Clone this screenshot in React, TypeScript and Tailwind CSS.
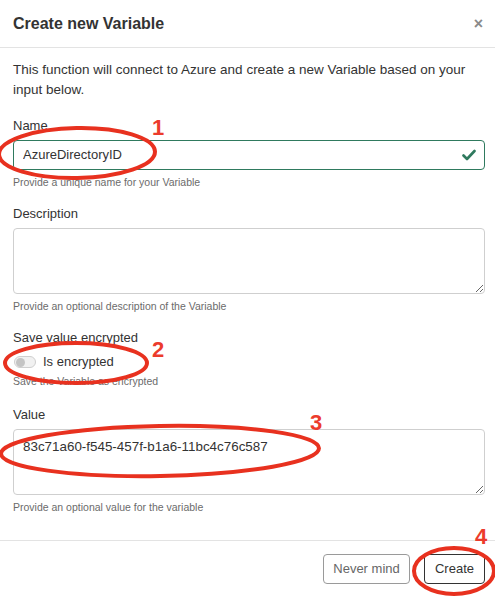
import React from "react";

function Field({ label, help, children, top = "mt-[15px]" }: { label: string; help: string; children: React.ReactNode; top?: string }) {
    return (
        <div className={top}>
            <label className="block text-[13px] leading-[20px] text-[#333]">{label}</label>
            <div className="mt-[4px]">{children}</div>
            <p className="mt-[5px] text-[10.5px] leading-[14px] text-[#6b6b6b]">{help}</p>
        </div>
    );
}

export default function App() {
    return (
        <div className="relative w-[495px] h-[598px] bg-white overflow-hidden font-['Liberation_Sans',Arial,sans-serif] text-[#333]">
            <div className="flex h-[48px] items-center justify-between border-b border-[#e3e3e3] pl-[13px] pr-[12px]">
                <h2 className="text-[16px] font-semibold text-[#333]">Create new Variable</h2>
                <span className="text-[16px] font-bold leading-none text-[#8a8a8a]">×</span>
            </div>

            <div className="pl-[13px] pr-[10px] pt-[12px] pb-[26px]">
                <p className="text-[13.5px] leading-[20px]">
                    This function will connect to Azure and create a new Variable based on your input below.
                </p>

                <Field label="Name" help="Provide a unique name for your Variable" top="mt-[16px]">
                    <div className="flex h-[30px] items-center rounded-[4px] border border-[#2f7a5e] pl-[9px] pr-[8px]">
                        <input
                            readOnly
                            value="AzureDirectoryID"
                            className="flex-1 bg-transparent text-[13px] text-[#333] outline-none"
                        />
                        <svg width="14" height="12" viewBox="0 0 14 12" className="text-[#2f7a5e]">
                            <path d="M1.5 6.5 L5 10 L12.5 2" fill="none" stroke="currentColor" strokeWidth="2.6" strokeLinecap="round" strokeLinejoin="round" />
                        </svg>
                    </div>
                </Field>

                <Field label="Description" help="Provide an optional description of the Variable">
                    <textarea
                        readOnly
                        className="block h-[66px] w-full rounded-[4px] border border-[#cfcfcf] px-[9px] py-[8px] text-[13px] leading-[18px] outline-none"
                    />
                </Field>

                <div className="mt-[15px]">
                    <label className="block text-[13px] leading-[20px]">Save value encrypted</label>
                    <div className="mt-[4px] flex h-[20px] items-center gap-[7px]">
                        <span className="ml-[1px] flex h-[12px] w-[22px] items-center rounded-full border border-[#cfcfcf] bg-[#f1f1f1] px-[1px]">
                            <span className="h-[9px] w-[9px] rounded-full bg-[#c4c4c4]" />
                        </span>
                        <span className="text-[13px]">Is encrypted</span>
                    </div>
                    <p className="mt-[2px] text-[10.5px] leading-[14px] text-[#6b6b6b]">Save the Variable as encrypted</p>
                </div>

                <Field label="Value" help="Provide an optional value for the variable" top="mt-[17px]">
                    <textarea
                        readOnly
                        value="83c71a60-f545-457f-b1a6-11bc4c76c587"
                        className="block h-[66px] w-full rounded-[4px] border border-[#cfcfcf] px-[9px] py-[8px] text-[13.4px] leading-[18px] text-[#333] outline-none"
                    />
                </Field>
            </div>

            <div className="flex items-center justify-end gap-[14px] border-t border-[#e3e3e3] pr-[10px] py-[13px]">
                <button className="h-[30px] w-[87px] rounded-[4px] border border-[#9a9a9a] text-[13px] text-[#666]">Never mind</button>
                <button className="h-[30px] w-[61px] rounded-[4px] border border-[#333] text-[13px] text-[#333]">Create</button>
            </div>

            {/* red annotation marks drawn over the screenshot */}
            <svg className="pointer-events-none absolute inset-0" width="495" height="598">
                <g fill="none" stroke="#e8311f" strokeWidth="4">
                    <ellipse cx="77" cy="153" rx="78" ry="25" transform="rotate(-1 77 153)" />
                    <ellipse cx="76" cy="363" rx="71" ry="20" />
                    <ellipse cx="160" cy="451" rx="159" ry="25" transform="rotate(-1 160 451)" />
                    <ellipse cx="454" cy="571" rx="40" ry="23" />
                </g>
            </svg>
            <span className="pointer-events-none absolute left-[152px] top-[117px] text-[22px] font-bold leading-none text-[#ec3b2c]">1</span>
            <span className="pointer-events-none absolute left-[152px] top-[339px] text-[22px] font-bold leading-none text-[#ec3b2c]">2</span>
            <span className="pointer-events-none absolute left-[310px] top-[412px] text-[22px] font-bold leading-none text-[#ec3b2c]">3</span>
            <span className="pointer-events-none absolute left-[475px] top-[526px] text-[22px] font-bold leading-none text-[#ec3b2c]">4</span>
        </div>
    );
}
